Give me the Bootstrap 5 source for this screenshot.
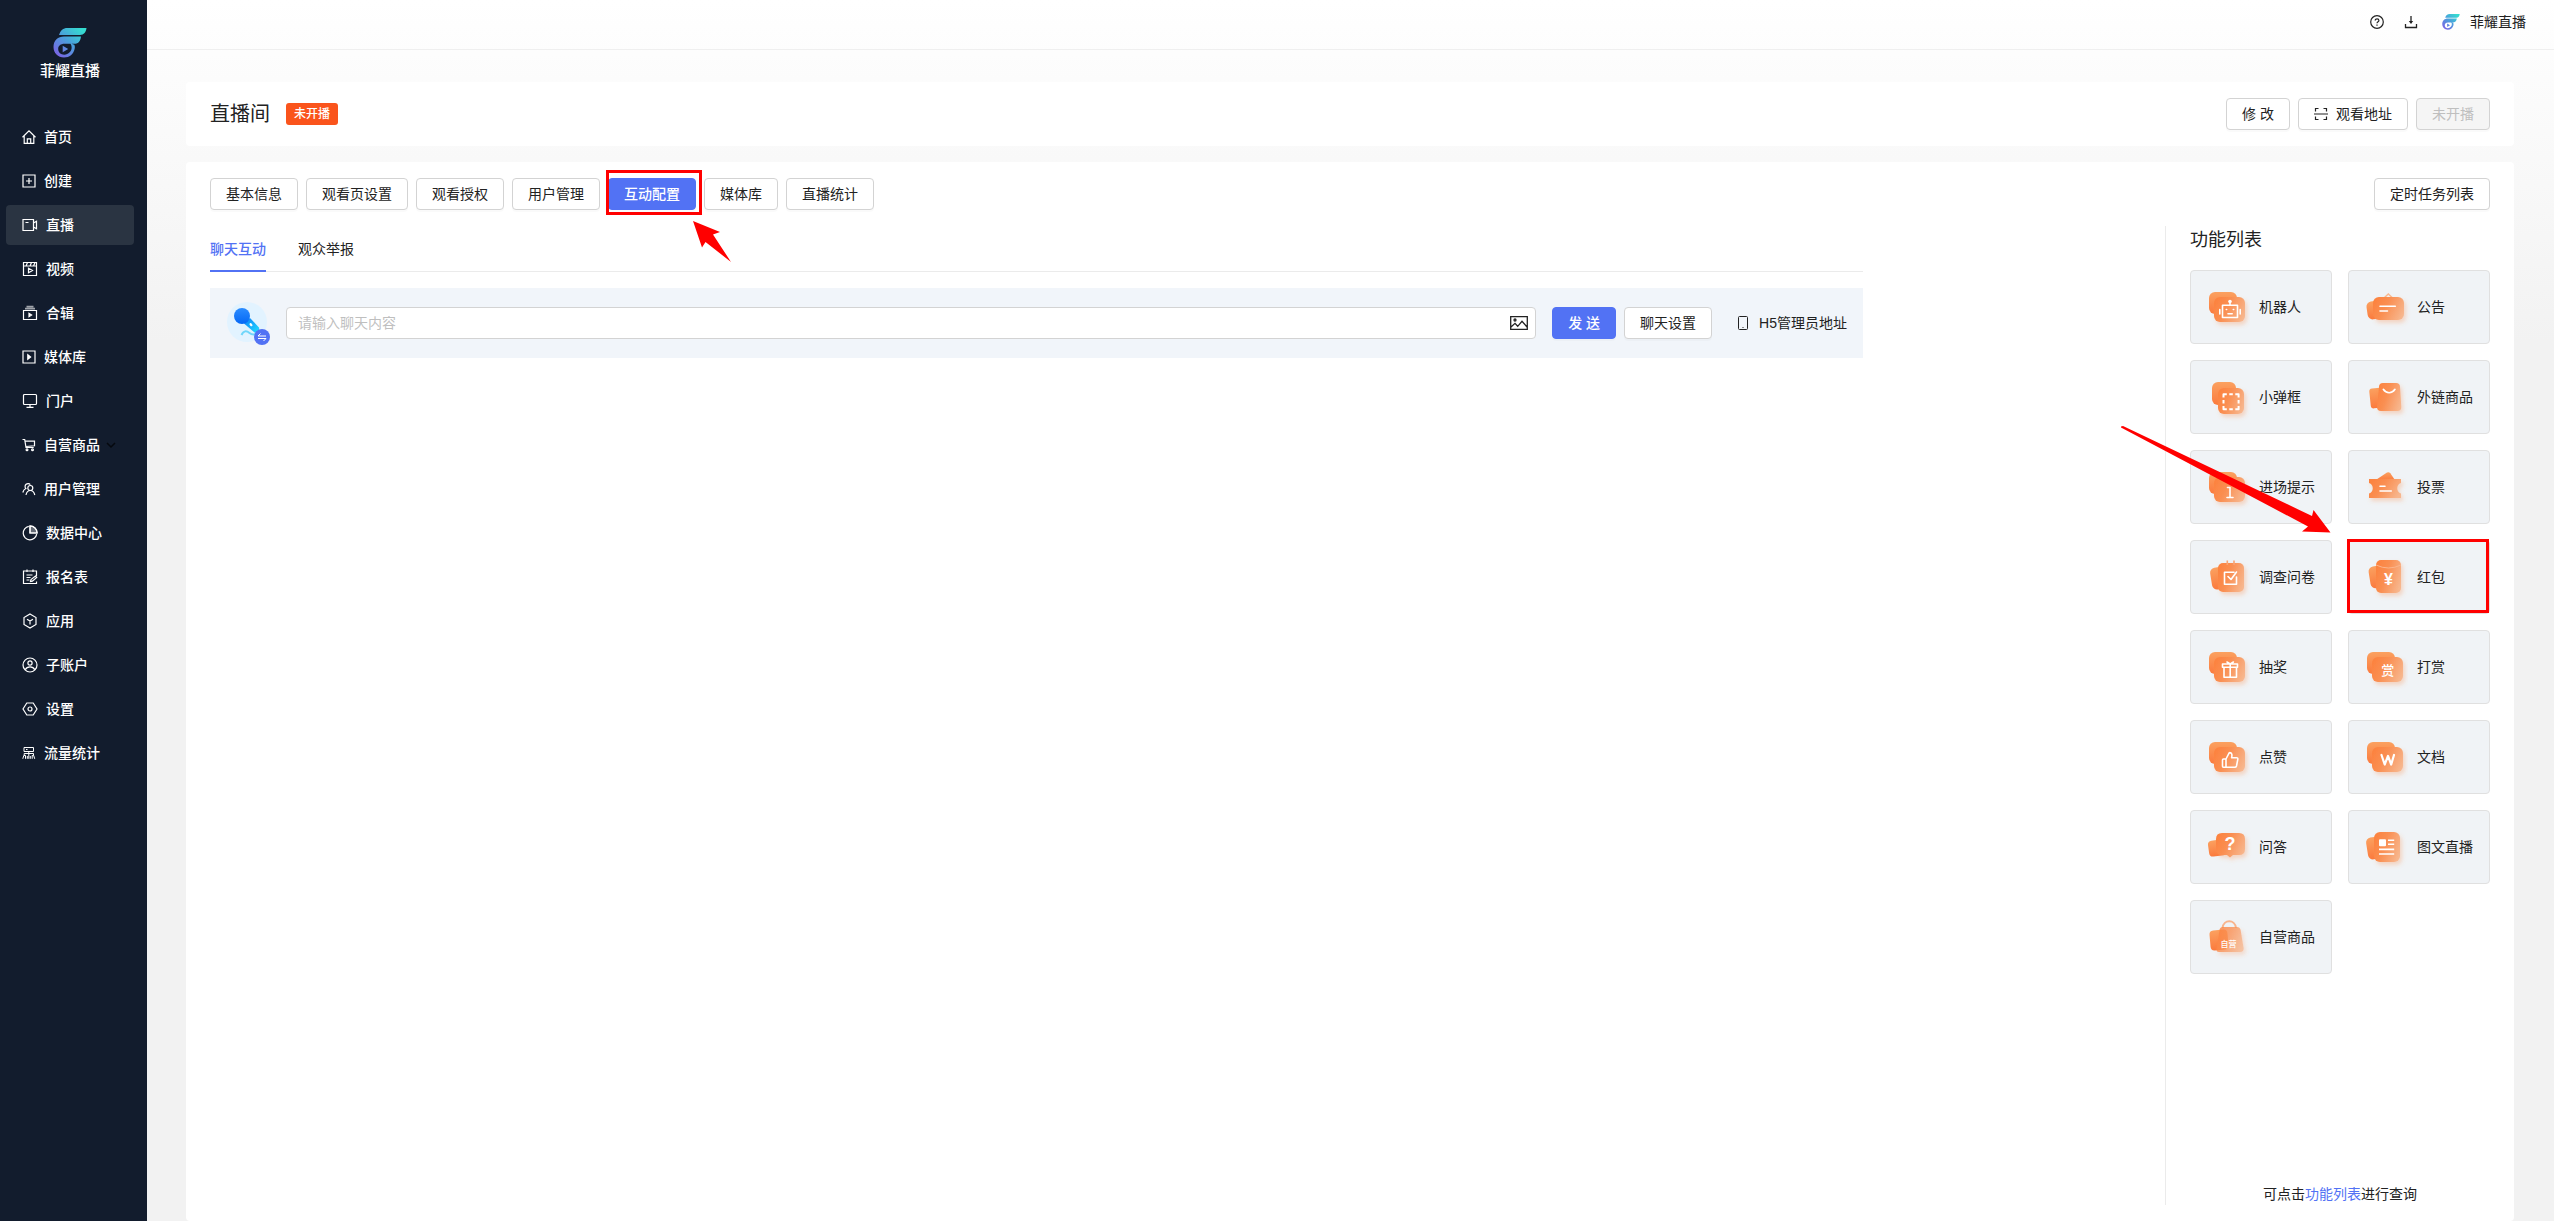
<!DOCTYPE html>
<html lang="zh-CN">
<head>
<meta charset="utf-8">
<meta name="viewport" content="width=device-width, initial-scale=1">
<title>菲耀直播</title>
<link href="https://cdn.jsdelivr.net/npm/bootstrap@5.3.0/dist/css/bootstrap.min.css" rel="stylesheet">
<style>
:root{--brand:#5272f4;--ink:#222;--line:#d9d9d9}
body{font-family:"Liberation Sans","Noto Sans CJK SC",sans-serif;font-size:14px;line-height:22px;color:var(--ink);background:linear-gradient(#fff,#f2f2f2 28%) no-repeat #f2f2f2}
.side{width:147px;background:#121c2d;color:#fff;padding:28px 13px 0 6px}
.brand{height:89px;font-size:15px;font-weight:500;color:#fff;text-decoration:none}
.brand svg{width:34px;height:30px}
.brand span{line-height:26px}
.menu-link{height:40px;padding:0 16px;gap:8px;border-radius:4px;color:#fff;font-weight:500;text-decoration:none}
.menu-link.active{background:#2a3442}
.menu-link svg{width:14px;height:14px;flex:none}
.menu-link svg.wide{width:16px;height:16px}
.menu-link svg.caret{width:10px;height:10px;color:#05080e;margin-left:-2px}
.ln{fill:none;stroke:currentColor;stroke-width:1.2}
.top{height:50px;padding:0 28px 6px 0;border-bottom:1px solid #efefef}
.top a{color:var(--ink);text-decoration:none}
.top .me{margin-left:24px;gap:10px}
.panel{background:#fff;border-radius:4px;padding:16px 24px}
.tag{background:#fa541c;color:#fff;font-size:12px;font-weight:500;line-height:22px;padding:0 8px;border-radius:3px}
.room{font-size:20px;line-height:32px}
.btn-line{--bs-btn-color:#222;--bs-btn-bg:#fff;--bs-btn-border-color:#d3d3d3;--bs-btn-hover-border-color:#5272f4;--bs-btn-hover-color:#5272f4;--bs-btn-disabled-bg:#f5f5f5;--bs-btn-disabled-color:#bfbfbf;--bs-btn-disabled-border-color:#d3d3d3;--bs-btn-disabled-opacity:1}
.btn-fill{--bs-btn-color:#fff;--bs-btn-bg:#5272f4;--bs-btn-border-color:#5272f4;--bs-btn-hover-bg:#6b87f7;--bs-btn-hover-color:#fff}
.btn-line,.btn-fill{--bs-btn-font-size:14px;--bs-btn-line-height:22px;--bs-btn-padding-x:15px;--bs-btn-padding-y:4px;--bs-btn-border-radius:4px;box-shadow:0 2px 0 rgba(0,0,0,.02);white-space:nowrap}
.btn-fill{font-weight:500}
.workarea{margin-top:16px;min-height:980px}
.chatcol{padding-right:302px}
.subtabs{border-bottom:1px solid #ebebeb;gap:32px}
.subtabs a{color:var(--ink);text-decoration:none;padding:12px 0 10px;border-bottom:2px solid transparent;margin-bottom:-1px}
.subtabs a.active{color:var(--brand);font-weight:500;border-color:var(--brand)}
.chatbar{margin-top:16px;height:70px;background:#f1f5fa;padding:0 16px}
.chatbar .mic{width:46px;height:44px;flex:none;margin-right:14px}
.sendbox{height:32px;border:1px solid #d3d3d3;border-radius:4px;background:#fff;padding:0 7px 0 11px}
.sendbox input{border:0;outline:0;background:none;min-width:0;padding:0}
.sendbox input::placeholder{color:#bfbfbf}
.feature{width:325px;flex:none;border-left:1px solid #ebebeb;padding-left:24px}
.feature h2{font-size:18px;font-weight:400;line-height:28px;margin:0 0 16px}
.tiles{display:grid;grid-template-columns:1fr 1fr;gap:16px}
.tile{height:74px;background:#f0f3f6;border:1px solid #e0e0e0;border-radius:4px;padding:0 0 0 15px;gap:9px;color:var(--ink);text-align:left;font-size:14px}
.tile>svg.glyph{width:44px;height:44px;flex:none;overflow:visible}
.bk{fill:url(#gBack)}.ft{fill:url(#gFront);filter:url(#soft)}
.wh{fill:none;stroke:#fff;stroke-width:1.6;stroke-linecap:round;stroke-linejoin:round}
.wt{fill:#fff;text-anchor:middle;font-family:"Liberation Sans","Noto Sans CJK SC",sans-serif;font-weight:500}
.frame{position:absolute;border:3px solid red;pointer-events:none}
.frame-tab{inset:-8px -6px -5px -2px}
.frame-tile{inset:-1px 1px 1px -1px}
.pointer{position:absolute;fill:red;pointer-events:none;overflow:visible}
.pointer-tab{left:85px;top:43px}
.pointer-tile{left:-227px;top:-114px}
</style>
</head>
<body>
<svg width="0" height="0" class="position-absolute" aria-hidden="true">
<defs>
<linearGradient id="gBack" x1="0" y1="0" x2="0" y2="1"><stop offset="0" stop-color="#fba160"/><stop offset="1" stop-color="#fb7a3d"/></linearGradient>
<linearGradient id="gFront" x1="0" y1=".3" x2="1" y2=".7"><stop offset="0" stop-color="#fc8340"/><stop offset=".4" stop-color="#fa8f52"/><stop offset="1" stop-color="#f7b68d"/></linearGradient>
<linearGradient id="gLogo" x1="1" y1="0" x2="0" y2="1"><stop offset=".1" stop-color="#35dcd0"/><stop offset=".5" stop-color="#4a9fdc"/><stop offset="1" stop-color="#8457e6"/></linearGradient>
<linearGradient id="gMic" x1="0" y1="0" x2="0" y2="1"><stop offset="0" stop-color="#2a8cff"/><stop offset="1" stop-color="#0568f5"/></linearGradient>
<linearGradient id="gGrip" x1="0" y1="0" x2="1" y2="1"><stop offset="0" stop-color="#0a7cf8"/><stop offset="1" stop-color="#22e0ff"/></linearGradient>
<filter id="soft" x="-30%" y="-30%" width="160%" height="170%"><feDropShadow dx="2" dy="3" stdDeviation="2" flood-color="#fb8a4c" flood-opacity=".3"/></filter>
</defs>
<symbol id="logo" viewBox="0 0 34 30"><path fill="url(#gLogo)" fill-rule="evenodd" d="M6 7C7.500 2.500 10 0 14.500 0H33.500C33 4 31 7 27 7ZM28 8.500C27.500 13 25.500 15.800 21.500 15.800H18.500L21.300 16.800C22 18 22 19.500 21.600 21C20.500 26 16.500 29.500 11 29.500C5 29.500 .5 25 .5 19C.5 12.500 5 8.500 11 8.500ZM17.500 15.800H11.500C7.500 15.800 5.200 18 5.200 21C5.200 24.500 7.800 26.700 11.200 26.700C15.500 26.700 19 23 18.600 19C18.500 17.500 18.200 16.700 17.500 15.800ZM9.700 17.800L15.200 21L9.700 24.300Z"/></symbol>
<symbol id="pair" viewBox="0 0 44 44"><rect class="bk" x="3" y="7" width="28" height="22" rx="6"/><rect class="ft" x="8" y="12" width="31" height="25" rx="6"/></symbol>
</svg>

<div class="d-flex min-vh-100">
<aside class="side flex-shrink-0">
<a href="#" class="brand d-flex flex-column align-items-center"><svg aria-hidden="true"><use href="#logo"/></svg><span>菲耀直播</span></a>
<nav class="d-flex flex-column gap-1" aria-label="主菜单">
<a href="#" class="menu-link d-flex align-items-center"><svg viewBox="0 0 14 14" class="ln"><path d="M.5 7.200L7 .9l6.500 6.300M2.200 6v7.300h9.600V6M5.300 13V8.800h3.400V13"/></svg>首页</a>
<a href="#" class="menu-link d-flex align-items-center"><svg viewBox="0 0 14 14" class="ln"><path d="M1 1h12v12H1zM7 4v6M4 7h6"/></svg>创建</a>
<a href="#" class="menu-link d-flex align-items-center active" aria-current="page"><svg viewBox="0 0 16 16" class="ln wide"><path d="M1 2.500h10.500v11H1zM11.500 6l3-1.800v7.600l-3-1.800M3.500 5.500h3"/></svg>直播</a>
<a href="#" class="menu-link d-flex align-items-center"><svg viewBox="0 0 16 16" class="ln wide"><path d="M1.500 1.500h13v13h-13zM1.500 5h13M5.500 1.500L4 5M9.500 1.500L8 5M13 1.500L11.500 5M6.500 7.200v4.600l4-2.300z"/></svg>视频</a>
<a href="#" class="menu-link d-flex align-items-center"><svg viewBox="0 0 16 16" class="ln wide"><path d="M1.500 5.500h13v9h-13z"/><path d="M3 3.700h10M4.500 1.700h7" stroke-opacity=".6" stroke-width="1.800"/><path fill="currentColor" d="M7 8.300v3.400l2.600-1.700z"/></svg>合辑</a>
<a href="#" class="menu-link d-flex align-items-center"><svg viewBox="0 0 14 14" class="ln"><path d="M1 1h12v12H1z"/><path fill="currentColor" d="M5.800 4.800v4.400L8.600 7z"/></svg>媒体库</a>
<a href="#" class="menu-link d-flex align-items-center"><svg viewBox="0 0 16 16" class="ln wide"><rect x="1.500" y="1.500" width="13" height="10" rx="1"/><path d="M8 11.500v2.500M4.500 14.300h7"/></svg>门户</a>
<a href="#" class="menu-link d-flex align-items-center"><svg viewBox="0 0 14 14" class="ln"><path d="M.5 1.500h2.200l1.300 8h7.700M3 3.200h9.500v4.600L3.800 8.500"/><circle cx="5" cy="11.800" r=".9"/><circle cx="10.500" cy="11.800" r=".9"/></svg>自营商品<svg viewBox="0 0 10 10" class="caret" fill="none" stroke="currentColor" stroke-width="1.500"><path d="M1 3l4 4 4-4"/></svg></a>
<a href="#" class="menu-link d-flex align-items-center"><svg viewBox="0 0 14 14" class="ln"><path d="M.8 10.500c.5-2 1.500-3.300 3-4A2.900 2.900 0 1 1 8.300 2.600"/><circle cx="8.300" cy="6" r="2.500"/><path d="M4 13c.5-2.500 2-4.500 4.300-4.500S12.200 10.500 12.800 13"/></svg>用户管理</a>
<a href="#" class="menu-link d-flex align-items-center"><svg viewBox="0 0 16 16" class="ln wide"><path d="M6.800 1.300a6.800 6.800 0 1 0 7.900 7.900M8 .8v7.200h7.200A7.200 7.200 0 0 0 8 .8z"/><path d="M8 8h7A7 7 0 0 0 8 1z" fill="currentColor" fill-opacity=".35"/></svg>数据中心</a>
<a href="#" class="menu-link d-flex align-items-center"><svg viewBox="0 0 16 16" class="ln wide"><path d="M14.500 7V2h-13v12.500h13v-2M5 .5v2.500M11 .5v2.500M4.500 6h6M4.500 8.500h4M4.500 11h3M8.500 12.500l.5-2 4.500-3.500 1.200 1.400-4.300 3.700z"/></svg>报名表</a>
<a href="#" class="menu-link d-flex align-items-center"><svg viewBox="0 0 16 16" class="ln wide"><path d="M8 1l6 3.500v7L8 15l-6-3.500v-7zM5 6.300l3 1.700 3-1.700M8 8v3.500"/></svg>应用</a>
<a href="#" class="menu-link d-flex align-items-center"><svg viewBox="0 0 16 16" class="ln wide"><circle cx="8" cy="8" r="7"/><circle cx="8" cy="6" r="2.100"/><path d="M3.200 12.800c1-2 2.600-2.900 4.800-2.900s3.800.9 4.800 2.900"/></svg>子账户</a>
<a href="#" class="menu-link d-flex align-items-center"><svg viewBox="0 0 16 16" class="ln wide"><path d="M4.800 2h6.400L15 8l-3.800 6H4.800L1 8z"/><circle cx="8" cy="8" r="2"/></svg>设置</a>
<a href="#" class="menu-link d-flex align-items-center"><svg viewBox="0 0 14 14" class="ln" style="stroke-width:1"><path d="M2 1.500h9.500v4H2zM4 3.500h1.500M6.800 5.500v2M2.200 9.500v-2h9.300v2M.8 12.800l1-3.300h1.700v3.300M10.200 12.800V9.500h1.500l1 3.300M6.800 7.500v5.300M5.300 12.800V10M8.300 12.800V10"/></svg>流量统计</a>
</nav>
</aside>

<div class="flex-grow-1 d-flex flex-column" style="min-width:0">
<header class="top d-flex align-items-center justify-content-end">
<a href="#" class="d-flex" aria-label="帮助"><svg width="14" height="14" viewBox="0 0 14 14" fill="none" stroke="currentColor" stroke-width="1.200"><circle cx="7" cy="7" r="6.300"/><path d="M5.200 5.600c0-2.500 3.700-2.300 3.700-.2C8.900 6.800 7 6.700 7 8.300M7 9.500v1.200"/></svg></a>
<a href="#" class="d-flex" style="margin-left:20px" aria-label="下载"><svg width="14" height="14" viewBox="0 0 14 14" fill="none" stroke="currentColor" stroke-width="1.300"><path d="M1.500 9v3.500h11V9M7 1v6.500"/><path d="M4.800 6h4.400L7 9z" fill="currentColor" stroke="none"/></svg></a>
<a href="#" class="me d-flex align-items-center"><svg width="18" height="16" aria-hidden="true"><use href="#logo"/></svg>菲耀直播</a>
</header>

<main class="flex-grow-1 d-flex flex-column" style="padding:32px 40px 0 39px">
<section class="panel d-flex align-items-center">
<h1 class="room fw-normal mb-0 me-3">直播间</h1><span class="tag">未开播</span>
<div class="d-flex gap-2 ms-auto">
<button type="button" class="btn btn-line">修 改</button>
<button type="button" class="btn btn-line d-flex align-items-center gap-2"><svg width="14" height="14" viewBox="0 0 14 14" fill="none" stroke="currentColor" stroke-width="1.200"><path d="M1.500 4.500v-3h3M9.500 1.500h3v3M12.500 9.500v3h-3M4.500 12.500h-3v-3M0 7h14"/></svg>观看地址</button>
<button type="button" class="btn btn-line" disabled>未开播</button>
</div>
</section>

<section class="panel workarea flex-grow-1 d-flex flex-column">
<div class="d-flex gap-2">
<button type="button" class="btn btn-line">基本信息</button>
<button type="button" class="btn btn-line">观看页设置</button>
<button type="button" class="btn btn-line">观看授权</button>
<button type="button" class="btn btn-line">用户管理</button>
<div class="position-relative z-1"><button type="button" class="btn btn-fill">互动配置</button><i class="frame frame-tab"></i>
<svg class="pointer pointer-tab" width="38" height="41" viewBox="0 0 38 41" aria-hidden="true"><path d="M0 0L27 11L20 13.500L38 41L12.500 21L9 26.500Z"/></svg></div>
<button type="button" class="btn btn-line">媒体库</button>
<button type="button" class="btn btn-line">直播统计</button>
<button type="button" class="btn btn-line ms-auto">定时任务列表</button>
</div>

<div class="d-flex flex-grow-1 mt-3">
<div class="chatcol flex-grow-1">
<nav class="subtabs d-flex" aria-label="聊天"><a href="#" class="active">聊天互动</a><a href="#">观众举报</a></nav>
<form class="chatbar d-flex align-items-center">
<svg class="mic" viewBox="0 0 46 44" aria-hidden="true"><circle cx="21" cy="21" r="20" fill="#e2f3ff"/><path d="M15.500 34c2-4.500 5-4.500 8-2s5 2 8 .5" fill="none" stroke="#6fd6fa" stroke-width="2"/><path d="M18 22.500l6-5.500 9 9.500c1 3-2 6-4.500 5z" fill="url(#gGrip)"/><ellipse cx="25" cy="23.700" rx="1.200" ry="1.800" fill="#fff" transform="rotate(-40 25 23.700)"/><circle cx="16" cy="15" r="8" fill="url(#gMic)"/><circle cx="36" cy="36" r="8" fill="#5272f4"/><path d="M40 35h-8l2.500-2.500M32 37.500h8l-2.500 2.500" fill="none" stroke="#fff"/></svg>
<div class="sendbox d-flex align-items-center flex-grow-1"><input type="text" class="flex-grow-1" placeholder="请输入聊天内容" aria-label="聊天内容"><svg width="18" height="14" viewBox="0 0 18 14" fill="none" stroke="currentColor" stroke-width="1.300"><path d="M.7.700h16.600v12.600H.7zM1 11l4-3.700 2.700 3 4.300-5L17 11"/><circle cx="5" cy="4" r="1"/></svg></div>
<button type="button" class="btn btn-fill ms-3">发 送</button>
<button type="button" class="btn btn-line ms-2">聊天设置</button>
<a href="#" class="d-flex align-items-center text-decoration-none text-reset ms-4 text-nowrap"><svg width="15" height="14" class="me-2" viewBox="0 0 15 14" fill="none" stroke="currentColor"><rect x="2.500" y=".5" width="9" height="13" rx="1"/><path d="M6.500 11.500h1"/></svg>H5管理员地址</a>
</form>
</div>

<aside class="feature d-flex flex-column">
<h2>功能列表</h2>
<div class="tiles">
<button type="button" class="tile d-flex align-items-center"><svg class="glyph" viewBox="0 0 44 44"><use href="#pair"/><path class="wh" d="M16.500 20.200h15v12.300h-15zM24 20v-3M13.800 24.500v4.500M34.200 24.500v4.500M22 28.700h4.200M20.300 24.500h.4M27.300 24.500h.4"/><circle cx="24" cy="16.500" r="1.800" fill="#fff"/></svg>机器人</button>
<button type="button" class="tile d-flex align-items-center"><svg class="glyph" viewBox="0 0 44 44"><rect class="bk" x="3" y="16" width="16" height="18" rx="5" transform="rotate(-8 11 25)"/><path d="M20 13l4.300-4 4.300 4" fill="none" stroke="#f9b88f" stroke-width="1.500"/><rect class="ft" x="9" y="12" width="31" height="23" rx="6"/><path class="wh" d="M16 21.300h15.300M16 26h7.500"/></svg>公告</button>
<button type="button" class="tile d-flex align-items-center"><svg class="glyph" viewBox="0 0 44 44"><rect class="bk" x="6" y="7" width="24" height="23" rx="6"/><rect class="ft" x="12" y="13" width="26" height="26" rx="6"/><path class="wh" style="stroke-width:2;stroke-linecap:butt" d="M17.500 22.500v-3.300h3.300M23.300 19.200h3.500M29.300 19.200h3.300v3.300M32.600 25v3.500M32.600 31v3.300h-3.300M26.800 34.300h-3.500M20.800 34.300h-3.300V31M17.500 28.500V25"/></svg>小弹框</button>
<button type="button" class="tile d-flex align-items-center"><svg class="glyph" viewBox="0 0 44 44"><rect class="bk" x="6" y="13" width="14" height="20" rx="3" transform="rotate(-6 13 23)"/><path class="ft" d="M19 8h13q4 0 4 4l1.300 20q0 4-4 4H17q-4 0-4-4L15 12q0-4 4-4z"/><path class="wh" d="M19.300 14.300c3 4.500 8.700 4.500 11.700 0"/></svg>外链商品</button>
<button type="button" class="tile d-flex align-items-center"><svg class="glyph" viewBox="0 0 44 44"><use href="#pair"/><path class="wh" d="M21.500 22.500H24v10M21 32.500h6"/></svg>进场提示</button>
<button type="button" class="tile d-flex align-items-center"><svg class="glyph" viewBox="0 0 44 44"><path class="bk" d="M11 15.500l12-8q2-1 3.300.8l5 7.200z"/><path class="ft" d="M5 14h32v4c-5 1.500-5 9 0 10.500V33H5v-4.500c5-1.500 5-9 0-10.500z"/><path class="wh" d="M16 21.300h5M16 26h11.300"/></svg>投票</button>
<button type="button" class="tile d-flex align-items-center"><svg class="glyph" viewBox="0 0 44 44"><rect class="bk" x="5" y="12" width="18" height="22" rx="5" transform="rotate(-9 14 23)"/><rect class="ft" x="12" y="8" width="26" height="29" rx="5"/><path d="M21.300 5.500v4.500M28 5.500v4.500" stroke="#f9a373" stroke-width="1.600"/><path class="wh" d="M28 17.200h-9.500v12h12V22M22 21.500l3 3 5.500-7.500"/></svg>调查问卷</button>
<div class="position-relative d-grid"><button type="button" class="tile d-flex align-items-center"><svg class="glyph" viewBox="0 0 44 44"><rect class="bk" x="5.500" y="11" width="16" height="22" rx="5" transform="rotate(-9 13 22)"/><rect class="ft" x="12" y="5" width="25" height="33" rx="5"/><path d="M12 10q12.500 6 25 0" fill="none" stroke="#fbb58c"/><text class="wt" x="24.500" y="30" font-size="16" style="font-weight:700">¥</text></svg>红包</button><i class="frame frame-tile"></i>
<svg class="pointer pointer-tile" width="210" height="108" viewBox="0 0 210 108" aria-hidden="true"><path d="M0 0.500L2 0L191 90L192.500 84L209.500 106.500L181 105.500L187 100.500L0 1.500Z"/></svg></div>
<button type="button" class="tile d-flex align-items-center"><svg class="glyph" viewBox="0 0 44 44"><use href="#pair"/><path class="wh" d="M16.500 19h15v3.200h-15zM18 22.200h12.500v10H18zM24.200 19v13M21 17l3.200 2 3.200-2"/></svg>抽奖</button>
<button type="button" class="tile d-flex align-items-center"><svg class="glyph" viewBox="0 0 44 44"><use href="#pair"/><text class="wt" x="23.700" y="30" font-size="13">赏</text></svg>打赏</button>
<button type="button" class="tile d-flex align-items-center"><svg class="glyph" viewBox="0 0 44 44"><use href="#pair"/><path class="wh" d="M20 24v8.300h-2.500q-1 0-1-1v-6.300q0-1 1-1zM20 24l3.300-6.300c2.700-.3 3 2 2.300 5h5q1.500 0 1.200 1.700l-1.300 6.600q-.4 1.300-1.700 1.300H20"/></svg>点赞</button>
<button type="button" class="tile d-flex align-items-center"><svg class="glyph" viewBox="0 0 44 44"><use href="#pair"/><path class="wh" style="stroke-width:2.200" d="M17.500 20l3.200 9.500L24 21l3.200 8.500L30 20"/></svg>文档</button>
<button type="button" class="tile d-flex align-items-center"><svg class="glyph" viewBox="0 0 44 44"><rect class="bk" x="2.500" y="15" width="18" height="16" rx="4" transform="rotate(-8 11 23)"/><path class="ft" d="M16 8h17q6 0 6 6v10q0 6-6 6h-6l-3 2.500L21 30h-5q-6 0-6-6V14q0-6 6-6z"/><text class="wt" x="24" y="25" font-size="18" style="font-weight:700">?</text></svg>问答</button>
<button type="button" class="tile d-flex align-items-center"><svg class="glyph" viewBox="0 0 44 44"><rect class="bk" x="3" y="12" width="16" height="22" rx="5" transform="rotate(-9 11 23)"/><rect class="ft" x="10" y="7" width="26" height="30" rx="6"/><rect x="15" y="14.300" width="7" height="7" rx="1" fill="#fff"/><path class="wh" style="stroke-linecap:butt" d="M24 15.200h6.200M24 19.300h6.200M15 24.400h15.200M15 29h15.200"/></svg>图文直播</button>
<button type="button" class="tile d-flex align-items-center"><svg class="glyph" viewBox="0 0 44 44"><rect class="bk" x="4" y="15" width="18" height="20" rx="4" transform="rotate(-5 13 25)"/><path d="M16.500 13c1-9 12.500-9 13.500 0" fill="none" stroke="#f8b48c" stroke-width="2"/><path class="ft" style="opacity:.8" d="M17 12h14q3 0 3.600 3l3 18q.4 4-3.600 4H13q-3 0-2.500-3.500L13.500 15q.5-3 3.500-3z"/><text class="wt" x="22.500" y="31.500" font-size="8">自营</text></svg>自营商品</button>
</div>
<p class="mt-auto mb-0 text-center">可点击<a href="#" class="text-decoration-none" style="color:var(--brand)">功能列表</a>进行查询</p>
</aside>
</div>
</section>
</main>
</div>
</div>
<script src="https://cdn.jsdelivr.net/npm/bootstrap@5.3.0/dist/js/bootstrap.bundle.min.js"></script>
</body>
</html>
